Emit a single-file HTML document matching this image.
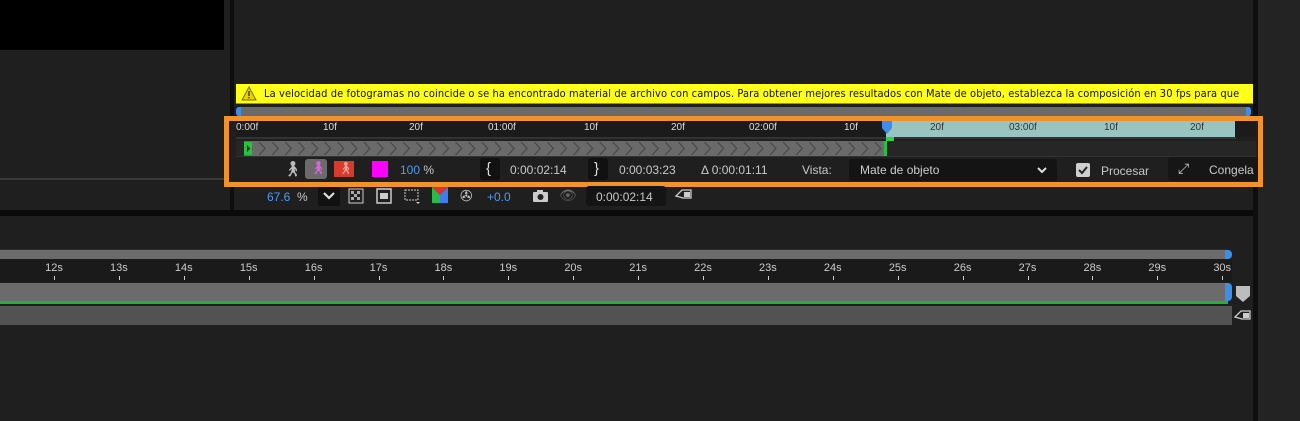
<!DOCTYPE html><html><head><style>
*{margin:0;padding:0;box-sizing:border-box}
body{width:1300px;height:421px;background:#1f1f1f;position:relative;overflow:hidden;font-family:"Liberation Sans",sans-serif;color:#c8c8c8}
.a{position:absolute}
.t{font-size:12px;white-space:nowrap}
</style></head><body>
<div class="a" style="left:0;top:0;width:224px;height:50px;background:#000"></div>
<div class="a" style="left:0;top:178px;width:230px;height:2px;background:#3a3a3a"></div>
<div class="a" style="left:230px;top:0;width:4px;height:212px;background:#0e0e0e"></div>
<div class="a" style="left:1253px;top:0;width:5px;height:421px;background:#0e0e0e"></div>
<div class="a" style="left:1258px;top:0;width:42px;height:421px;background:#232323"></div>
<div class="a" style="left:0;top:210px;width:1253px;height:6px;background:#0a0a0a"></div>
<!-- warning -->
<div class="a" style="left:236px;top:84px;width:1017px;height:20px;background:#ffff1a;border-bottom:1px solid #888;overflow:hidden">
<svg class="a" style="left:5px;top:2px" width="16" height="15"><path d="M8 1L15 14H1Z" fill="#e8d200" stroke="#7a6a00" stroke-width="1"/><rect x="7.3" y="5" width="1.4" height="5" fill="#333"/><rect x="7.3" y="11" width="1.4" height="1.4" fill="#333"/></svg>
<div class="a t" style="left:28px;top:3px;font-size:11px;color:#111;font-family:'DejaVu Sans Condensed','DejaVu Sans',sans-serif;letter-spacing:0.1px">La velocidad de fotogramas no coincide o se ha encontrado material de archivo con campos. Para obtener mejores resultados con Mate de objeto, establezca la composición en 30 fps para que</div>
</div>
<div class="a" style="left:238px;top:107px;width:1012px;height:9px;background:#6a6a6a"></div>
<div class="a" style="left:236px;top:107px;width:5px;height:9px;background:#3d8ee8;border-radius:3px 0 0 3px"></div>
<div class="a" style="left:1246px;top:107px;width:5px;height:9px;background:#3d8ee8;border-radius:0 3px 3px 0"></div>
<!-- orange box -->
<div class="a" style="left:224px;top:116px;width:1039px;height:71px;border:5px solid #f0932b;background:#1f1f1f"></div>
<div class="a" style="left:236px;top:121px;width:1020px;height:16px;background:#1b1b1b"></div>
<div class="a" style="left:886px;top:121px;width:349px;height:16px;background:#9ac4c1"></div>
<div class="a" style="left:236px;top:137px;width:1000px;height:2px;background:#333"></div>
<div class="a t" style="left:236px;top:122px;font-size:10px;color:#ddd">0:00f</div>
<div class="a t" style="left:323px;top:122px;font-size:10px;color:#ddd">10f</div>
<div class="a t" style="left:409px;top:122px;font-size:10px;color:#ddd">20f</div>
<div class="a t" style="left:488px;top:122px;font-size:10px;color:#ddd">01:00f</div>
<div class="a t" style="left:584px;top:122px;font-size:10px;color:#ddd">10f</div>
<div class="a t" style="left:671px;top:122px;font-size:10px;color:#ddd">20f</div>
<div class="a t" style="left:749px;top:122px;font-size:10px;color:#ddd">02:00f</div>
<div class="a t" style="left:844px;top:122px;font-size:10px;color:#ddd">10f</div>
<div class="a t" style="left:930px;top:122px;font-size:10px;color:#333">20f</div>
<div class="a t" style="left:1009px;top:122px;font-size:10px;color:#333">03:00f</div>
<div class="a t" style="left:1104px;top:122px;font-size:10px;color:#333">10f</div>
<div class="a t" style="left:1190px;top:122px;font-size:10px;color:#333">20f</div>
<svg class="a" style="left:881px;top:121px" width="12" height="14"><path d="M1 0H11V7L6 13L1 7Z" fill="#3d8ee8"/></svg>
<div class="a" style="left:886px;top:137px;width:8px;height:4px;background:#2bd24a"></div>
<!-- chevron track -->
<div class="a" style="left:236px;top:141px;width:1020px;height:15px;background:#262626"></div>
<svg class="a" style="left:244px;top:141px" width="643" height="15">
<defs><pattern id="cv" width="13.1" height="15" patternUnits="userSpaceOnUse"><rect width="13.1" height="15" fill="#6a6a6a"/><path d="M2 1L8 7.5L2 14" stroke="#474747" fill="none" stroke-width="1.2"/></pattern></defs>
<rect width="643" height="15" fill="url(#cv)"/><rect x="0" y="1" width="8" height="13" fill="#27c23f"/><path d="M3 4L6 7.5L3 11Z" fill="#111"/><rect x="640" y="0" width="3" height="15" fill="#27c23f"/></svg>
<div class="a" style="left:236px;top:156px;width:1020px;height:1px;background:#333"></div>
<!-- controls -->
<div class="a t" style="left:283px;top:160px;font-size:15px;color:#bbb">🚶︎</div>
<div class="a" style="left:305px;top:159px;width:22px;height:20px;background:#6b6b6b;border-radius:3px"></div>
<div class="a t" style="left:310px;top:160px;font-size:13px;color:#e060e0">🚶︎</div>
<div class="a" style="left:334px;top:161px;width:20px;height:16px;background:#d73a2e"></div>
<div class="a t" style="left:338px;top:161px;font-size:12px;color:#e8a090">🚶︎</div>
<div class="a" style="left:372px;top:161px;width:16px;height:16px;background:#ff00ff"></div>
<div class="a t" style="left:400px;top:163px;color:#4d9cf0">100 <span style="color:#c8c8c8">%</span></div>
<div class="a" style="left:480px;top:158px;width:20px;height:22px;background:#111;border-radius:3px"></div>
<div class="a t" style="left:486px;top:160px;font-size:15px;color:#ddd">{</div>
<div class="a t" style="left:510px;top:163px">0:00:02:14</div>
<div class="a" style="left:588px;top:158px;width:20px;height:22px;background:#111;border-radius:3px"></div>
<div class="a t" style="left:594px;top:160px;font-size:15px;color:#ddd">}</div>
<div class="a t" style="left:619px;top:163px">0:00:03:23</div>
<div class="a t" style="left:701px;top:163px">Δ 0:00:01:11</div>
<div class="a t" style="left:802px;top:163px">Vista:</div>
<div class="a" style="left:849px;top:159px;width:208px;height:22px;background:#141414;border-radius:3px"></div>
<div class="a t" style="left:860px;top:163px;color:#ccc">Mate de objeto</div>
<svg class="a" style="left:1036px;top:165px" width="12" height="10"><path d="M2 3L6 7L10 3" stroke="#ddd" stroke-width="2" fill="none"/></svg>
<div class="a" style="left:1076px;top:163px;width:14px;height:14px;background:#cfcfcf;border-radius:2px"></div>
<svg class="a" style="left:1077px;top:164px" width="12" height="12"><path d="M2 6L5 9L10 3" stroke="#222" stroke-width="2" fill="none"/></svg>
<div class="a t" style="left:1101px;top:164px">Procesar</div>
<div class="a" style="left:1168px;top:157px;width:90px;height:24px;background:#161616;border-radius:3px 0 0 3px"></div>
<div class="a t" style="left:1178px;top:160px;font-size:14px;color:#ccc">⤢</div>
<div class="a t" style="left:1209px;top:163px">Congela</div>
<!-- lower toolbar -->
<div class="a t" style="left:267px;top:190px;color:#4d9cf0">67.6 <span style="color:#c8c8c8">&nbsp;%</span></div>
<div class="a" style="left:318px;top:187px;width:22px;height:19px;background:#111;border-radius:2px"></div>
<svg class="a" style="left:322px;top:191px" width="14" height="10"><path d="M2 2L7 7L12 2" stroke="#ddd" stroke-width="2.2" fill="none"/></svg>
<svg class="a" style="left:348px;top:188px" width="16" height="16"><rect x="1" y="1" width="14" height="14" fill="none" stroke="#ccc"/><path d="M3 3h3v3h-3zM9 3h3v3h-3zM6 6h3v3h-3zM3 9h3v3h-3zM9 9h3v3h-3z" fill="#aaa"/></svg>
<svg class="a" style="left:376px;top:188px" width="16" height="16"><rect x="1" y="1" width="14" height="14" fill="none" stroke="#ccc" stroke-width="1.5"/><rect x="4" y="5" width="8" height="6" fill="#ccc"/></svg>
<svg class="a" style="left:403px;top:187px" width="18" height="18"><rect x="2" y="3" width="13" height="10" fill="none" stroke="#ccc" stroke-dasharray="2 1"/><path d="M13 15h4l-2 2z" fill="#ccc"/></svg>
<svg class="a" style="left:432px;top:187px" width="16" height="18"><path d="M0 0H16L8 8Z" fill="#e03030"/><path d="M0 0L8 8V16H0Z" fill="#2db84a"/><path d="M16 0L8 8V16H16Z" fill="#3a7ef0"/></svg>
<div class="a t" style="left:460px;top:187px;font-size:15px;color:#ccc">✇</div>
<div class="a t" style="left:487px;top:190px;color:#4d9cf0">+0.0</div>
<svg class="a" style="left:532px;top:189px" width="17" height="14"><rect x="1" y="3" width="15" height="10" rx="1" fill="#ccc"/><rect x="5" y="1" width="6" height="3" fill="#ccc"/><circle cx="8.5" cy="8" r="3" fill="#222"/></svg>
<div class="a t" style="left:559px;top:187px;font-size:14px;color:#666">👁︎</div>
<div class="a" style="left:586px;top:186px;width:80px;height:20px;background:#141414;border-radius:3px"></div>
<div class="a t" style="left:596px;top:190px">0:00:02:14</div>
<svg class="a" style="left:674px;top:189px" width="18" height="14"><path d="M2 7L8 1H17V9H9Z" fill="none" stroke="#ccc" stroke-width="1.3"/><rect x="10" y="3" width="6" height="5" fill="#ccc"/></svg>
<!-- timeline -->
<div class="a" style="left:0;top:249px;width:1228px;height:10px;background:#6b6b6b;border-top:1px solid #2a2a2a"></div>
<div class="a" style="left:1225px;top:250px;width:7px;height:9px;background:#3d8ee8;border-radius:0 4px 4px 0"></div>
<div class="a" style="left:0;top:259px;width:1232px;height:23px;background:#1a1a1a"></div>
<div id="rl"></div>
<div class="a" style="left:0;top:283px;width:1228px;height:18px;background:#6b6b6b"></div>
<div class="a" style="left:1225px;top:283px;width:7px;height:18px;background:#3d8ee8;border-radius:0 4px 4px 0"></div>
<div class="a" style="left:0;top:301px;width:1228px;height:3px;background:#20b23a"></div>
<div class="a" style="left:0;top:306px;width:1232px;height:19px;background:#525252"></div>
<svg class="a" style="left:1236px;top:286px" width="14" height="17"><path d="M0 0H14V10L7 16L0 10Z" fill="#bdbdbd"/></svg>
<svg class="a" style="left:1233px;top:310px" width="18" height="14"><path d="M2 7L8 1H17V9H9Z" fill="none" stroke="#ccc" stroke-width="1.3"/><rect x="10" y="3" width="6" height="5" fill="#ccc"/></svg>
<script>
var h='';for(var i=12;i<=30;i++){var x=54+(i-12)*64.9;h+='<div class="a t" style="left:'+(x-10)+'px;top:262px;width:20px;text-align:center;font-size:11px;color:#ccc">'+i+'s</div><div class="a" style="left:'+Math.round(x)+'px;top:276px;width:1px;height:4px;background:#ccc"></div>';}
document.getElementById('rl').innerHTML=h;
</script>
</body></html>
